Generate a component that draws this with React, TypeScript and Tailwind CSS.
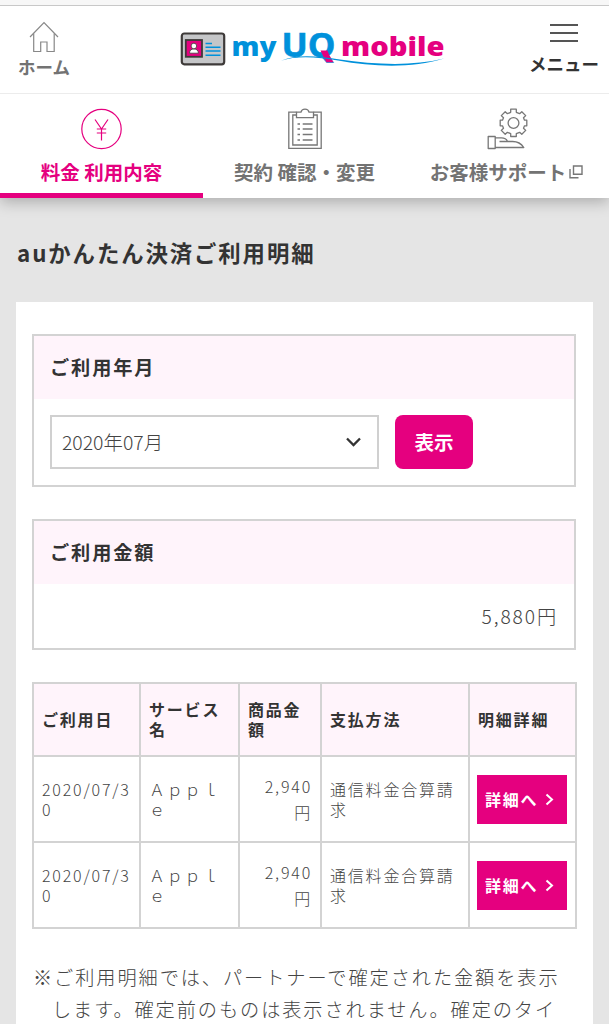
import { FC, ReactNode } from 'react';

const PINK = '#e5007f';

const details = [
  { date: '2020/07/30', service: 'Ａｐｐｌｅ', price: '2,940円', method: '通信料金合算請求' },
  { date: '2020/07/30', service: 'Ａｐｐｌｅ', price: '2,940円', method: '通信料金合算請求' },
];

const HomeIcon: FC = () => (
  <svg width="30" height="32" viewBox="0 0 30 32" fill="none" stroke="#888" strokeWidth="1.2">
    <path d="M1 16 L15 1.5 L29 16" />
    <path d="M4.7 12.5 V30.5 H11.7 V21 H18 V30.5 H25.2 V12.5" />
  </svg>
);

const YenIcon: FC = () => (
  <svg width="42" height="42" viewBox="0 0 42 42" fill="none" stroke={PINK} strokeWidth="1.2">
    <circle cx="20.5" cy="21" r="19.7" />
    <path d="M14 11.5 L20.5 21 L27 11.5 M20.5 21 V32.5 M15.8 21 H25.2 M15.8 25 H25.2" />
  </svg>
);

const ClipboardIcon: FC = () => (
  <svg width="34" height="42" viewBox="0 0 34 42" fill="none" stroke="#777" strokeWidth="1.3">
    <path d="M8.5 4.2 H0.8 V40.4 H33.2 V4.2 H25.5" />
    <path d="M8.5 7 H4.8 V37 H29.2 V7 H25.5" />
    <path d="M8.5 4.2 H13 C13.8 0.2 20.2 0.2 21 4.2 H25.5 V9.7 H8.5 Z" />
    <path d="M9.5 16 H12 M14.7 16 H24.5 M9.5 21 H12 M14.7 21 H24.5 M9.5 26.5 H12 M14.7 26.5 H24.5 M9.5 32 H12 M14.7 32 H24.5" />
  </svg>
);

const SupportIcon: FC = () => (
  <svg width="42" height="42" viewBox="0 0 42 42" fill="none" stroke="#777" strokeWidth="1.3" strokeLinejoin="round">
    <circle cx="26.5" cy="15" r="5.4" />
    <path d="M23.7 1.2 H29.3 V4.3 L32.6 5.7 L34.8 3.7 L38.7 7.6 L36.5 9.8 L37.5 12.2 H39.8 V17.8 H37.5 L36.5 20.2 L38.7 22.4 L34.8 26.3 L32.6 24.3 L29.3 25.6 V28.5 H23.7 V25.6 L20.4 24.3 L18.2 26.3 L14.3 22.4 L16.5 20.2 L15.5 17.8 H13.2 V12.2 H15.5 L16.5 9.8 L14.3 7.6 L18.2 3.7 L20.4 5.7 L23.7 4.3 Z" />
    <path d="M1.2 28.5 H8.2 V40.5 H1.2 Z M8.2 29.8 H14.5 C17.5 29.8 19.5 31 20.3 33 M12.5 33.5 H25 C30.5 33.3 34 35.2 36.8 39.5 H8.2" />
  </svg>
);

const ExternalIcon: FC = () => (
  <svg width="14" height="14" viewBox="0 0 14 14" fill="none" stroke="#777" strokeWidth="1.4">
    <path d="M4.5 1 H13 V9.3 H4.5 Z" />
    <path d="M1 4 V12.8 H9.5" />
  </svg>
);

const Logo: FC = () => (
  <svg width="270" height="64" viewBox="0 -14 270 64">
    <rect x="1.8" y="3.5" width="42.4" height="30.8" rx="2.5" fill="#c5c6c8" stroke="#3e3a39" strokeWidth="2.2" />
    <rect x="5.8" y="10" width="16.2" height="16.8" fill={PINK} stroke="#3e3a39" strokeWidth="1.8" />
    <path d="M9.5 23.2 C9.5 20 11.5 19 13.8 19 C16.2 19 18.4 20 18.4 23.2 Z" fill="#fff" stroke="#3e3a39" strokeWidth="0.8" />
    <circle cx="13.9" cy="16" r="2.8" fill="#fff" stroke="#3e3a39" strokeWidth="0.8" />
    <path d="M25.5 13.5 H32 M25.5 17.2 H40.5 M25.5 21.1 H40.5 M25.5 25.2 H40.5" stroke="#0091db" strokeWidth="1.5" />
    <text x="51.5" y="26.2" fontSize="27" fontWeight="800" textLength="45" lengthAdjust="spacingAndGlyphs" fill="#0091db" className="font-['Open_Sans',sans-serif]">my</text>
    <text x="101.5" y="27.3" fontSize="34" fontWeight="700" textLength="54" lengthAdjust="spacingAndGlyphs" fill="#0091db" stroke="#0091db" strokeWidth="0.6" className="font-['Open_Sans',sans-serif]">UQ</text>
    <path d="M140.5 20.5 L147.5 20.5 L149 24.5 L153.5 32.3 H146.5 L143.8 27.5 Z" fill={PINK} />
    <path d="M101 30.8 C116 25.5 138 27 158 30.6 C194 37 232 38.5 264 28.6 C232 36.5 194 34.5 160 29.5 C138 26 116 24 101 30.8 Z" fill="#0091db" />
    <text x="161" y="26.2" fontSize="26.5" fontWeight="800" textLength="103.5" lengthAdjust="spacingAndGlyphs" fill={PINK} className="font-['Open_Sans',sans-serif]">mobile</text>
  </svg>
);

interface TabProps {
  icon: ReactNode;
  active?: boolean;
  children: ReactNode;
}

const Tab: FC<TabProps> = ({ icon, active, children }) => (
  <a
    className={`flex h-[104px] flex-col items-center border-b-[5px] pt-3.5 text-[19.5px] leading-7 font-bold whitespace-nowrap ${
      active ? 'border-[#e5007f] text-[#e5007f]' : 'border-white text-[#737373]'
    }`}
  >
    {icon}
    <span className="mt-2 flex items-center">{children}</span>
  </a>
);

const Header: FC = () => (
  <header className="relative bg-white shadow-[0_4px_14px_rgba(0,0,0,0.25)]">
    <div className="h-1.5 border-b border-[#c8c8c8] bg-[#f7f7f7]" />
    <div className="flex h-[88px] border-b border-[#ececec]">
      <a className="flex w-[88px] flex-col items-center pt-[15px] text-[17.5px] leading-6 font-bold text-[#737373]">
        <HomeIcon />
        <span className="mt-0.5">ホーム</span>
      </a>
      <div className="ml-[92px] pt-2.5">
        <Logo />
      </div>
      <a className="ml-auto flex w-[90px] flex-col items-center pt-[18px] text-[17.5px] leading-6 font-bold whitespace-nowrap text-[#333]">
        <span className="flex flex-col gap-1.5">
          <span className="h-0.5 w-7 bg-[#555]" />
          <span className="h-0.5 w-7 bg-[#555]" />
          <span className="h-0.5 w-7 bg-[#555]" />
        </span>
        <span className="mt-2.5">メニュー</span>
      </a>
    </div>
    <nav className="grid grid-cols-3">
      <Tab icon={<YenIcon />} active>料金 利用内容</Tab>
      <Tab icon={<ClipboardIcon />}>契約 確認・変更</Tab>
      <Tab icon={<SupportIcon />}>
        お客様サポート
        <span className="mr-0.5 ml-[3px]">
          <ExternalIcon />
        </span>
      </Tab>
    </nav>
  </header>
);

const Panel: FC<{ title: string; children: ReactNode }> = ({ title, children }) => (
  <section className="mb-8 border-2 border-[#d3d3d3]">
    <h2 className="flex h-[63px] items-center bg-[#fff4fb] px-4 text-[19.2px] font-bold tracking-[1.9px]">{title}</h2>
    {children}
  </section>
);

const DetailTable: FC = () => (
  <table className="w-[543px] table-fixed border-collapse text-[16px] leading-5 tracking-[1.8px] break-all">
    <colgroup>
      <col className="w-[107px]" />
      <col className="w-[99px]" />
      <col className="w-[82px]" />
      <col className="w-[148px]" />
      <col className="w-[107px]" />
    </colgroup>
    <thead>
      <tr className="h-[73px] bg-[#fff4fb] text-left">
        {['ご利用日', 'サービス名', '商品金額', '支払方法', '明細詳細'].map((label) => (
          <th key={label} className="border-2 border-[#d3d3d3] px-2 pb-0.5 font-bold">
            {label}
          </th>
        ))}
      </tr>
    </thead>
    <tbody className="font-light text-[#444]">
      {details.map((row, i) => (
        <tr key={i} className="h-[86px]">
          <td className="border-2 border-[#d3d3d3] pl-2">{row.date}</td>
          <td className="border-2 border-[#d3d3d3] px-2">{row.service}</td>
          <td className="border-2 border-[#d3d3d3] pr-2 pl-[18px] text-right leading-[26px]">{row.price}</td>
          <td className="border-2 border-[#d3d3d3] px-2">{row.method}</td>
          <td className="border-2 border-[#d3d3d3] px-[7px]">
            <a className="flex h-[49px] w-[90px] items-center bg-[#e5007f] pl-2 font-bold whitespace-nowrap text-white">
              詳細へ
              <svg className="ml-[7px]" width="9" height="13" viewBox="0 0 9 13" fill="none" stroke="#fff" strokeWidth="2">
                <path d="M1.5 1.5 L7 6.5 L1.5 11.5" />
              </svg>
            </a>
          </td>
        </tr>
      ))}
    </tbody>
  </table>
);

export default function App() {
  return (
    <div className="h-[1024px] w-[609px] overflow-hidden bg-[#e5e5e5] font-['Noto_Sans_CJK_JP',sans-serif] text-[#333]">
      <Header />
      <main className="px-4">
        <h1 className="flex h-[104px] items-center pt-1.5 pl-px text-[22.4px] font-bold tracking-[1.9px]">
          auかんたん決済ご利用明細
        </h1>
        <div className="h-[760px] bg-white px-4 pt-8 pr-[17px]">
          <Panel title="ご利用年月">
            <div className="flex h-[86px] gap-4 px-4 pt-4">
              <div className="flex h-[54px] w-[329px] items-center justify-between border-2 border-[#d0d0d0] pr-4 pl-2.5 text-[19.4px] font-light text-[#444]">
                2020年07月
                <svg width="15" height="10" viewBox="0 0 15 10" fill="none" stroke="#333" strokeWidth="2.3">
                  <path d="M1 1.5 L7.5 8 L14 1.5" />
                </svg>
              </div>
              <button className="h-[54px] w-[78px] rounded-lg bg-[#e5007f] text-[19.5px] font-bold text-white">表示</button>
            </div>
          </Panel>
          <Panel title="ご利用金額">
            <p className="flex h-[64px] items-center justify-end pr-4 text-[19.2px] font-light tracking-[1.9px] text-[#444]">5,880円</p>
          </Panel>
          <DetailTable />
          <p className="mt-8 pl-[20px] -indent-[19px] text-[19.2px] leading-8 font-light tracking-[1.92px] text-[#444]">
            ※ご利用明細では、パートナーで確定された金額を表示します。確定前のものは表示されません。確定のタイ
          </p>
        </div>
      </main>
    </div>
  );
}
